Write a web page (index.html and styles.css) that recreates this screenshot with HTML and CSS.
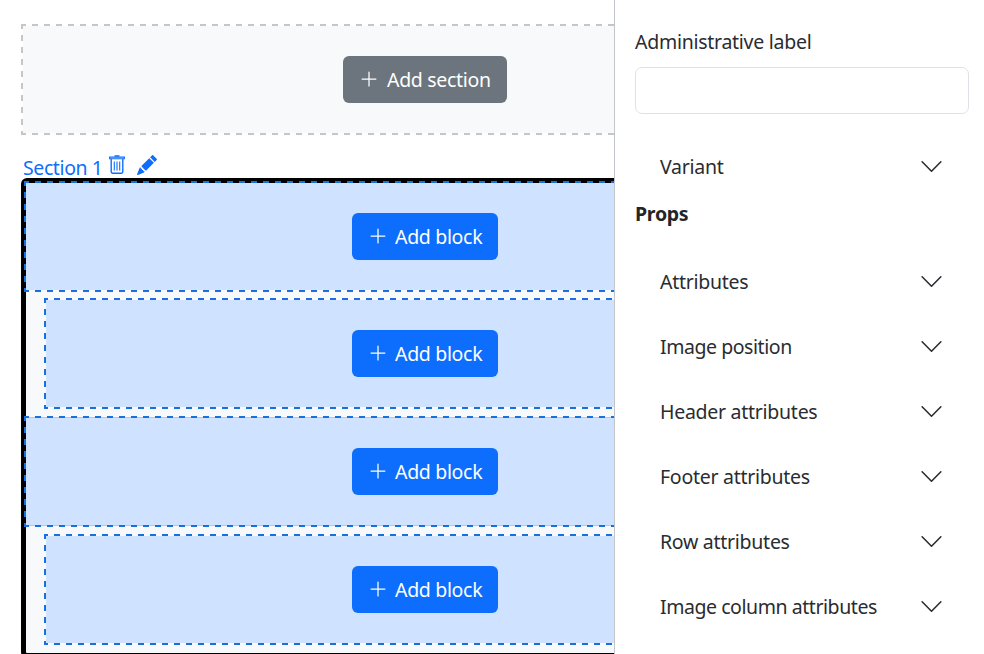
FILE: index.html
```
<!DOCTYPE html>
<html lang="en">
<head>
<meta charset="utf-8">
<title>Layout builder</title>
<link rel="stylesheet" href="styles.css">
</head>
<body>
<svg class="defs" aria-hidden="true">
  <symbol id="plus" viewBox="0 0 16 16"><path fill="currentColor" d="M8 2a.5.5 0 0 1 .5.5v5h5a.5.5 0 0 1 0 1h-5v5a.5.5 0 0 1-1 0v-5h-5a.5.5 0 0 1 0-1h5v-5A.5.5 0 0 1 8 2"/></symbol>
  <symbol id="chevron" viewBox="0 0 16 16"><path fill="none" stroke="currentColor" stroke-linecap="round" stroke-linejoin="round" d="m2 5 6 6 6-6"/></symbol>
</svg>
<div class="app">
  <main class="canvas">
    <div class="add-section dashed"><button class="btn btn-gray"><svg><use href="#plus"/></svg><span>Add section</span></button></div>
    <div class="section-head">
      <span class="section-name">Section 1</span>
      <svg class="trash" viewBox="0 0 20 20"><g fill="none" stroke="currentColor"><path d="M7.500 1h5" stroke-width="1.500"/><path d="M2.600 2.100h14.800v1.700H2.600z" stroke-width="1.100"/><path d="M4.200 4v12.800q0 1.400 1.400 1.400h8.800q1.400 0 1.400-1.400V4" stroke-width="1.400"/><path d="M7.300 6.500v9M10 6.500v9M12.700 6.500v9" stroke-width="1.100"/></g></svg>
      <svg class="pencil" viewBox="0 0 16 16"><path fill="currentColor" d="M12.854.146a.5.5 0 0 0-.707 0L10.500 1.793 14.207 5.500l1.647-1.646a.5.5 0 0 0 0-.708zm.646 6.061L9.793 2.500 3.293 9H3.500a.5.5 0 0 1 .5.5v.5h.5a.5.5 0 0 1 .5.5v.5h.5a.5.5 0 0 1 .5.5v.5h.5a.5.5 0 0 1 .5.5v.207zm-7.468 7.468A.5.5 0 0 1 6 13.500V13h-.5a.5.5 0 0 1-.5-.5V12h-.5a.5.5 0 0 1-.5-.5V11h-.5a.5.5 0 0 1-.5-.5V10h-.5a.5.5 0 0 1-.175-.032l-.179.178a.5.5 0 0 0-.110.168l-2 5a.5.5 0 0 0 .650.650l5-2a.5.5 0 0 0 .168-.110z"/></svg>
    </div>
    <div class="section">
      <div class="region dashed"><button class="btn"><svg><use href="#plus"/></svg><span>Add block</span></button></div>
      <div class="region dashed inner"><button class="btn"><svg><use href="#plus"/></svg><span>Add block</span></button></div>
      <div class="region dashed lined"><button class="btn"><svg><use href="#plus"/></svg><span>Add block</span></button></div>
      <div class="region dashed inner"><button class="btn"><svg><use href="#plus"/></svg><span>Add block</span></button></div>
    </div>
  </main>
  <aside class="panel">
    <label class="label" for="admin">Administrative label</label>
    <input class="input" id="admin" type="text">
    <div class="item variant"><span>Variant</span><svg><use href="#chevron"/></svg></div>
    <h2 class="props">Props</h2>
    <div class="item"><span>Attributes</span><svg><use href="#chevron"/></svg></div>
    <div class="item tight"><span>Image position</span><svg><use href="#chevron"/></svg></div>
    <div class="item"><span>Header attributes</span><svg><use href="#chevron"/></svg></div>
    <div class="item"><span>Footer attributes</span><svg><use href="#chevron"/></svg></div>
    <div class="item"><span>Row attributes</span><svg><use href="#chevron"/></svg></div>
    <div class="item tight"><span>Image column attributes</span><svg><use href="#chevron"/></svg></div>
  </aside>
</div>
</body>
</html>
```
FILE: styles.css
```
* { box-sizing: border-box; }
body { margin: 0; background: #fff; color: #292c30; font: 19.5px/30px "Noto Sans", sans-serif; letter-spacing: -.27px; }
.defs { display: none; }
.app { display: flex; width: 984px; height: 654px; overflow: hidden; }
.canvas { width: 614px; flex: none; padding: 26px 0 0 21px; overflow: hidden; }
.dashed { --dash: #1a6fe0; --shift: -1px; position: relative; }
.dashed::before {
  content: "";
  position: absolute;
  inset: -2px;
  pointer-events: none;
  --h: linear-gradient(90deg, var(--dash) 50%, transparent 50%);
  --v: linear-gradient(var(--dash) 50%, transparent 50%);
  background:
    var(--h) var(--shift) 0 / 12px 2px repeat-x,
    var(--h) var(--shift) 100% / 12px 2px repeat-x,
    var(--v) 0 -1px / 2px 12px repeat-y,
    var(--v) 100% -1px / 2px 12px repeat-y;
}
.add-section { --dash: #c6c6c6; width: 804px; height: 107px; margin-left: 2px; display: flex; align-items: center; justify-content: center; background: #f8f9fa; }
.btn { display: flex; align-items: center; width: 146px; height: 47px; padding: 0 0 0 16px; border: 0; border-radius: 6px; background: #0d6efd; color: #fff; font: inherit; letter-spacing: -.32px; white-space: nowrap; }
.btn svg { flex: none; width: 20px; height: 20px; margin: -1px 7px 0 0; }
.btn-gray { width: 164px; background: #6c757d; }
.btn-gray svg { margin-right: 8px; }
.section-head { display: flex; height: 45px; padding: 20px 0 0 2px; color: #0d6efd; }
.section-name { width: 79px; white-space: nowrap; letter-spacing: -.4px; }
.trash { width: 20px; height: 20px; margin: 2px 0 0 5px; }
.pencil { width: 20px; height: 20px; margin: 2px 0 0 10px; }
.section { width: 808px; height: 480px; border: 5px solid #000; border-radius: 6px; background: #f8f9fa; }
.region { height: 107px; margin-bottom: 11px; display: flex; align-items: center; justify-content: center; background: #cfe2ff; }
.region:first-child { margin-bottom: 10px; }
.inner { --shift: -2px; margin-left: 20px; margin-right: 20px; }
.lined { box-shadow: 0 -1px #c3c7cc, 0 1px #c3c7cc; }
.panel { flex: 1; border-left: 1px solid #c2c5c9; padding: 27px 15px 0 20px; background: #fff; }
.label { display: block; height: 40px; }
.input { display: block; width: 334px; height: 47px; border: 1px solid #dee2e6; border-radius: 7px; background: #fff; }
.item { display: flex; align-items: center; justify-content: space-between; height: 65px; padding: 0 25px; }
.item svg { width: 25px; height: 25px; }
.tight { letter-spacing: -.44px; }
.variant { margin-top: 20px; }
.props { height: 50px; margin: 0; color: #212529; font-size: inherit; font-weight: 700; line-height: 30px; }
```
